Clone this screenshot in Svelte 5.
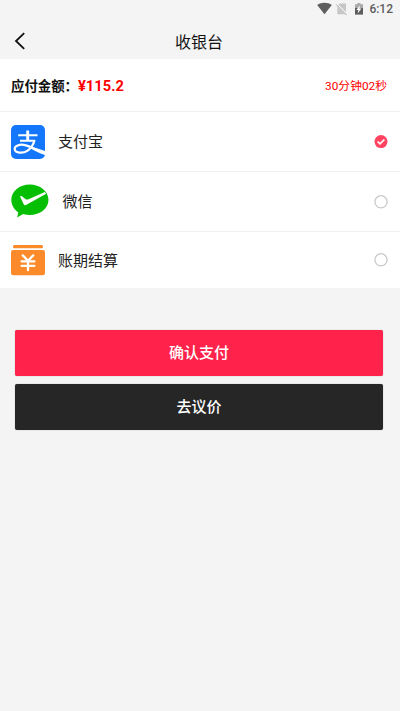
<script lang="ts">
	type Method = { id: string; label: string };

	const methods: Method[] = [
		{ id: 'alipay', label: '支付宝' },
		{ id: 'wechat', label: '微信' },
		{ id: 'credit', label: '账期结算' }
	];

	let selected = $state('alipay');
</script>

<div class="page">
	<div class="status">
		<svg class="status__icons" viewBox="0 0 50 16" aria-hidden="true">
			<path d="M.2 4.1C4.2 1 10.8 1 14.8 4.1L7.5 13.3Z" fill="#5d5d5d" />
			<path d="M22.6 2.5H29v10.8h-8.7V5Z" fill="#c6c6c6" />
			<path d="M19.4 2.9 30 13.8" stroke="#f4f4f4" stroke-width="2.2" />
			<path d="M19.2 3.4 29.6 14.1" stroke="#a7a7a7" stroke-width="1" />
			<path d="M40.5 2h3v1.2H46v4.3h-8V3.2h2.5Z" fill="#a9a9a9" />
			<path d="M38 7h8v6.6h-8Z" fill="#5d5d5d" />
			<path d="m43 4.2-3.6 4.9h2l-.7 3.3 3.7-4.8h-2Z" fill="#fff" />
		</svg>
		<span class="status__time">6:12</span>
	</div>

	<header class="nav">
		<button class="nav__back" aria-label="返回">
			<svg viewBox="0 0 12 18"><path d="M10.2 1.2 2 9l8.2 7.8" /></svg>
		</button>
		<h1>收银台</h1>
	</header>

	<section class="sheet">
		<div class="amount">
			<span class="amount__label">应付金额：</span>
			<span class="amount__value">¥115.2</span>
			<span class="amount__timer">30分钟02秒</span>
		</div>

		{#each methods as method (method.id)}
			<button class="method method--{method.id}" onclick={() => (selected = method.id)}>
				{#if method.id === 'alipay'}
					<svg class="method__icon" width="34" height="34" viewBox="0 0 34 34">
						<rect width="34" height="34" rx="5" fill="#1477fb" />
						<g fill="none" stroke="#fff">
							<path d="M7.2 10.2h19.3M9 15.7h14.9" stroke-width="1.9" />
							<path d="M16.7 5.5v10.2" stroke-width="2.9" />
							<path
								d="M23.6 15.2c-1.3 4.6-3.9 8.3-7.4 10.7-3.9 2.7-11.8 2.5-12.5-1.5-.6-3.6 5.1-5.6 10.3-4.3 5.3 1.3 12.2 5.2 20 7.9"
								stroke-width="2.2"
							/>
						</g>
						<path d="M21 21.8 34 26v4.1c-5-1.7-9.5-4.1-14.2-6.7Z" fill="#fff" />
					</svg>
				{:else if method.id === 'wechat'}
					<svg class="method__icon" width="38.5" height="34.5" viewBox="0 0 39 35">
						<path
							d="M19 .4C8.7.4.3 7.2.3 16.1c0 5.5 2.8 9.9 7.1 12.7L6.2 34l6.1-3.5c2.1.7 4.4 1 6.7 1 10.4 0 19-6.7 19-15.5C38 7.2 29.4.4 19 .4Z"
							fill="#06bf04"
						/>
						<path
							d="M9.2 12.7c.8-.7 1.5-.5 2.2.1l3.4 2.6c.8.5 1.5.6 2.4.2L34.3 8l1.4 1.8-20.5 11.4c-1.1.6-2 .3-2.5-.8Z"
							fill="#fff"
						/>
					</svg>
				{:else}
					<svg class="method__icon" width="34" height="31" viewBox="0 0 34 31">
						<rect x="2" width="30" height="3.2" rx="1.5" fill="#fb8a2b" />
						<rect y="5" width="34" height="25.2" rx="2.2" fill="#fb8a2b" />
						<path
							d="m11.8 10.4 5.2 5.4 5.2-5.4M10.6 16.4h12.8M10.6 20.8h12.8M17 16v9.2"
							fill="none"
							stroke="#fff"
							stroke-width="2.3"
							stroke-linecap="round"
						/>
					</svg>
				{/if}
				<span class="method__label">{method.label}</span>
				<svg class="method__radio" viewBox="0 0 14 14">
					{#if selected === method.id}
						<circle cx="7" cy="6.6" r="6.5" fill="#ff4361" />
						<path d="m3.6 6.5 2.4 2.4 4.4-4.4" fill="none" stroke="#fff" stroke-width="1.7" />
					{:else}
						<circle cx="7" cy="6.8" r="6.1" fill="#fff" stroke="#c9c9c9" stroke-width="1.3" />
					{/if}
				</svg>
			</button>
		{/each}
	</section>

	<div class="actions">
		<button class="action action--pay">确认支付</button>
		<button class="action action--bargain">去议价</button>
	</div>
</div>

<style>
	:global(body) {
		background: #f4f4f4;
	}

	.page {
		box-sizing: border-box;
		min-height: 711px;
		background: #f4f4f4;
		color: #222;
		font-family: Roboto, 'Noto Sans CJK SC', sans-serif;
	}

	button {
		margin: 0;
		padding: 0;
		border: 0;
		background: none;
		color: inherit;
		font: inherit;
	}

	.status {
		display: flex;
		align-items: center;
		justify-content: flex-end;
		gap: 2px;
		height: 17px;
		padding-right: 7px;
		color: #5d5d5d;
		font-size: 12px;
		font-weight: 500;
		line-height: 17px;
	}

	.status__icons {
		width: 50px;
		height: 16px;
	}

	.status__time {
		padding-top: 2px;
	}

	.nav {
		display: grid;
		grid-template-columns: 40px 1fr 42px;
		align-items: center;
		height: 42px;
	}

	.nav__back {
		height: 18px;
		margin-top: 5px;
		padding-left: 14px;
		text-align: left;
	}

	.nav__back svg {
		display: block;
		width: 12px;
		height: 18px;
		fill: none;
		stroke: #111;
		stroke-width: 1.8;
	}

	h1 {
		margin: 10px 0 0;
		color: #111;
		font-size: 16px;
		font-weight: 400;
		line-height: 22px;
		text-align: center;
	}

	.sheet {
		background: #fff;
	}

	.amount {
		display: flex;
		align-items: center;
		height: 52px;
		padding: 0 13px 0 11px;
		border-bottom: 1px solid #f2f2f2;
	}

	.amount__label {
		width: 67px;
		color: #111;
		font-size: 13.4px;
		font-weight: 700;
		white-space: nowrap;
	}

	.amount__value {
		padding-top: 2px;
		color: #f00;
		font-size: 14.7px;
		font-weight: 700;
	}

	.amount__timer {
		margin-left: auto;
		padding-bottom: 1px;
		color: #f00;
		font-size: 11.8px;
	}

	.method {
		display: flex;
		align-items: center;
		box-sizing: border-box;
		width: 100%;
		height: 60px;
		padding: 0 12px 0 11px;
		border-bottom: 1px solid #f2f2f2;
		font-size: 15px;
		text-align: left;
	}

	.method:last-child {
		height: 56px;
		border-bottom: 0;
	}

	.method__icon {
		flex: none;
	}

	.method__label {
		flex: 1;
		margin-left: 13px;
		padding-bottom: 2px;
	}

	.method__radio {
		width: 14px;
		height: 14px;
	}

	.actions {
		display: grid;
		gap: 8px;
		padding: 41.5px 17px 0 15px;
	}

	.action {
		height: 46px;
		padding-bottom: 2px;
		border-radius: 2px;
		color: #fff;
		font-size: 15px;
		font-weight: 500;
		box-shadow: 0 0 1px rgb(0 0 0 / 0.45);
	}

	.action--pay {
		background: #ff234b;
	}

	.action--bargain {
		background: #262626;
	}
</style>
